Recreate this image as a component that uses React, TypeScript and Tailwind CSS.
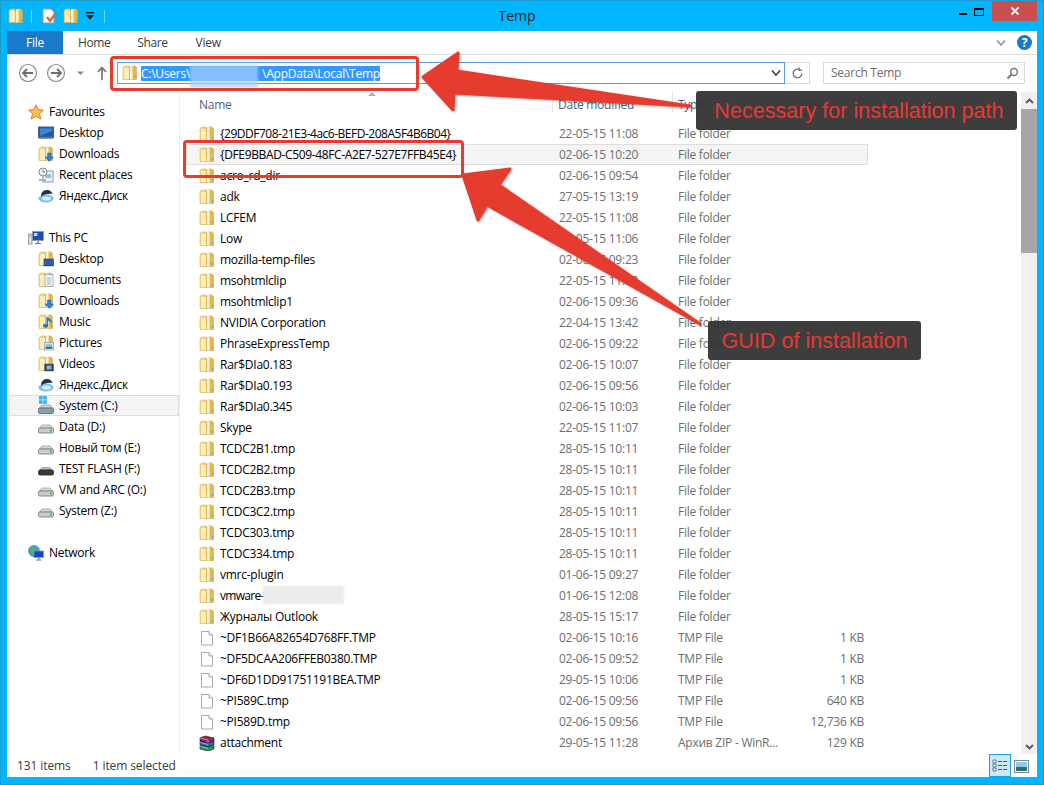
import React from "react";

const Folder = ({ overlay }: { overlay?: React.ReactNode }) => (
  <svg width="16" height="16" viewBox="0 0 16 16" className="shrink-0">
    <path d="M1 2.5 L3 1 H7 V14.5 H1 Z" fill="#f4d77e" stroke="#d4b565" strokeWidth=".6" />
    <path d="M7 2 L10 1 H13 L14.5 2.5 V14.5 H7 Z" fill="#e8c160" stroke="#c9a44a" strokeWidth=".6" />
    <path d="M2 3 H7 V14 H2 Z" fill="#fbeeb8" />
    <path d="M8 1.6 L10.5 1 V14.5 H8 Z" fill="#f7f1d5" />
    <path d="M11 2 H14 V14.5 H11 Z" fill="#e3b94f" />
    <rect x="13" y="11" width="1.4" height="1.6" fill="#5aa5dd" />
    {overlay}
  </svg>
);

const FileIco = () => (
  <svg width="16" height="16" viewBox="0 0 16 16" className="shrink-0">
    <path d="M2.5 1.5 H10 L13.5 5 V15 H2.5 Z" fill="#fff" stroke="#a9a9a9" />
    <path d="M10 1.5 V5 H13.5" fill="#f2f2f2" stroke="#a9a9a9" />
  </svg>
);

const Rar = () => (
  <svg width="16" height="16" viewBox="0 0 16 16" className="shrink-0">
    <path d="M1 11 L6 9 L15 11 V14 L9 16 L1 14 Z" fill="#1d9c55" stroke="#111" strokeWidth=".6" />
    <path d="M1 6.5 L6 4.5 L15 6.5 V10 L9 12 L1 10 Z" fill="#2f5fc0" stroke="#111" strokeWidth=".6" />
    <path d="M1 3 L6 1 L15 3 V6 L9 8 L1 6 Z" fill="#9c2257" stroke="#111" strokeWidth=".6" />
    <path d="M1 3 L9 5 V8 M9 9.5 L1 7.5 M9 13.5 L1 11.5" fill="none" stroke="#ddd" strokeWidth=".6" />
  </svg>
);

const Star = () => (
  <svg width="16" height="16" viewBox="0 0 16 16" className="shrink-0">
    <path d="M8 .8 L10.2 5.6 L15.4 6.2 L11.5 9.6 L12.7 15 L8 12.2 L3.3 15 L4.5 9.6 L.6 6.2 L5.8 5.6 Z" fill="#fbc14e" stroke="#e8772c" />
  </svg>
);

const Monitor = () => (
  <svg width="16" height="16" viewBox="0 0 16 16" className="shrink-0">
    <rect x=".5" y="2" width="15" height="10.5" fill="#2a5fb0" stroke="#4b5a6b" />
    <rect x="2" y="3.5" width="12" height="7.5" fill="#3f86d6" />
    <path d="M2 11 L14 6 V11 Z" fill="#1f5aa8" />
    <rect x="1" y="12.5" width="14" height="1.5" fill="#8a94a0" />
  </svg>
);

const Recent = () => (
  <svg width="16" height="16" viewBox="0 0 16 16" className="shrink-0">
    <rect x="5" y="4" width="10" height="11" fill="#eef2f5" stroke="#8b97a3" />
    <rect x="7" y="7" width="6" height="4" fill="#8fc0e6" />
    <rect x="1" y="12" width="7" height="2" fill="#aab2ba" />
    <circle cx="5" cy="5" r="4" fill="#f4f4f4" stroke="#7f8790" />
    <path d="M5 2.8 V5 H7" stroke="#555" fill="none" strokeWidth=".8" />
  </svg>
);

const Yandex = () => (
  <svg width="16" height="16" viewBox="0 0 16 16" className="shrink-0">
    <ellipse cx="8" cy="10.5" rx="7.5" ry="4" fill="#79bdec" />
    <path d="M3 8.5 C3 4 6 2 9 2 C12 2 14 4 14.5 6 C10 5.5 6 6.5 3 8.5 Z" fill="#26323f" />
    <ellipse cx="8.5" cy="10.5" rx="4.5" ry="2" fill="#d8edfb" />
  </svg>
);

const PC = () => (
  <svg width="16" height="16" viewBox="0 0 16 16" className="shrink-0">
    <rect x=".5" y="4" width="3.5" height="10" fill="#dfe3e6" stroke="#7a828a" strokeWidth=".7" />
    <rect x="1.3" y="5.5" width="1.8" height="1" fill="#4fb052" />
    <rect x="4.5" y="1.5" width="11" height="9" fill="#1c4fae" stroke="#8994a0" strokeWidth=".7" />
    <rect x="6" y="3" width="3.4" height="3" fill="#bcdcf6" />
    <rect x="9" y="10.5" width="2" height="2.5" fill="#9aa3ab" />
    <rect x="7" y="13" width="6" height="1" fill="#7a828a" />
  </svg>
);

const Drive = () => (
  <svg width="16" height="16" viewBox="0 0 16 16" className="shrink-0">
    <path d="M1.5 9 L4 6 H12 L14.5 9 Z" fill="#d9dcdf" stroke="#8f959b" strokeWidth=".7" />
    <rect x=".5" y="9" width="15" height="5" rx="1.4" fill="#c9cdd0" stroke="#6c7278" strokeWidth=".8" />
    <rect x="12" y="10.5" width="2" height="2" fill="#52b24a" />
  </svg>
);

const SysDrive = () => (
  <svg width="16" height="20" viewBox="0 0 16 20" className="shrink-0">
    <rect x="1" y="0" width="3.6" height="3.6" fill="#2ab7f0" />
    <rect x="5.2" y="0" width="3.6" height="3.6" fill="#2ab7f0" />
    <rect x="1" y="4.2" width="3.6" height="3.6" fill="#2ab7f0" />
    <rect x="5.2" y="4.2" width="3.6" height="3.6" fill="#2ab7f0" />
    <path d="M1.5 12 L4 9 H12 L14.5 12 Z" fill="#d2d6da" stroke="#8f959b" strokeWidth=".7" />
    <rect x=".5" y="12" width="15" height="5.5" rx="1.4" fill="#8aa0ad" stroke="#566069" strokeWidth=".8" />
    <rect x="12" y="13.8" width="2" height="2" fill="#52b24a" />
  </svg>
);

const Flash = () => (
  <svg width="16" height="16" viewBox="0 0 16 16" className="shrink-0">
    <path d="M2 9 L4 6.5 H12 L14 9 Z" fill="#bfc2c5" stroke="#777" strokeWidth=".6" />
    <rect x=".5" y="9" width="15" height="5" rx="1.6" fill="#3b3b3b" stroke="#222" strokeWidth=".8" />
  </svg>
);

const Net = () => (
  <svg width="16" height="16" viewBox="0 0 16 16" className="shrink-0">
    <circle cx="6" cy="6" r="5.5" fill="#3e9fd8" stroke="#2f7f9f" strokeWidth=".6" />
    <path d="M2 3 L6 1.5 L7 5 L4 8 L2 6 Z" fill="#5eb64f" />
    <rect x="6" y="6" width="9.5" height="6.5" fill="#1148c2" stroke="#8a949e" strokeWidth=".7" />
    <rect x="10" y="12.5" width="1.6" height="2" fill="#8a949e" />
    <rect x="8" y="14.5" width="5.5" height="1" fill="#707880" />
  </svg>
);

const ovDesktop = (
  <g><rect x="6" y="8" width="9.5" height="6.5" fill="#2a5fb0" stroke="#39454f" strokeWidth=".7" /><rect x="5.5" y="14" width="10" height="1.2" fill="#39454f" /></g>
);
const ovDocs = (
  <g><rect x="7" y="2.5" width="8" height="12" fill="#f2f5f7" stroke="#8b97a3" strokeWidth=".7" /><path d="M9 6 H13 M9 8 H13 M9 10 H13 M9 12 H13" stroke="#8fa6bd" strokeWidth=".8" /></g>
);
const ovDown = <path d="M9.5 7 H13 V11 H15.5 L11.2 15.5 L7 11 H9.5 Z" fill="#2b83d4" stroke="#1b5fa8" strokeWidth=".5" />;
const ovMusic = <path d="M10 3 V11.5 A2.6 2 0 1 1 8.5 10 V3 Z M10 3 C12 5 14.5 6 13.5 10 C13 7.5 11.5 7 10 6.5 Z" fill="#2979c9" />;
const ovPic = (
  <g><rect x="6.5" y="7.5" width="9" height="7.5" fill="#fff" stroke="#8a949e" strokeWidth=".7" /><rect x="7.5" y="8.5" width="7" height="3" fill="#8fcbe8" /><rect x="7.5" y="11.5" width="7" height="2.5" fill="#3d7f6b" /></g>
);
const ovVid = (
  <g><rect x="6.5" y="8" width="9" height="7" fill="#2d3d4d" stroke="#5a6670" strokeWidth=".6" /><rect x="8.5" y="9.5" width="5" height="4" fill="#7fb8e0" /></g>
);

const NavRow = ({ icon, label, indent, hover }: { icon: React.ReactNode; label: string; indent?: boolean; hover?: boolean }) => (
  <div className={`flex h-[21px] items-center border ${hover ? "border-[#dedede] bg-[#f5f5f5]" : "border-transparent"} ${indent ? "pl-[28px]" : "pl-[18px]"}`}>
    <div className="flex h-[16px] w-[16px] shrink-0 items-center justify-center">{icon}</div>
    <span className="ml-[5px] whitespace-nowrap text-black">{label}</span>
  </div>
);

type Row = [string, string, string, string, "d" | "f" | "z"];
const FF = "File folder";
const rows: Row[] = [
  ["{29DDF708-21E3-4ac6-BEFD-208A5F4B6B04}", "22-05-15 11:08", FF, "", "d"],
  ["{DFE9BBAD-C509-48FC-A2E7-527E7FFB45E4}", "02-06-15 10:20", FF, "", "d"],
  ["acro_rd_dir", "02-06-15 09:54", FF, "", "d"],
  ["adk", "27-05-15 13:19", FF, "", "d"],
  ["LCFEM", "22-05-15 11:08", FF, "", "d"],
  ["Low", "22-05-15 11:06", FF, "", "d"],
  ["mozilla-temp-files", "02-06-15 09:23", FF, "", "d"],
  ["msohtmlclip", "22-05-15 11:08", FF, "", "d"],
  ["msohtmlclip1", "02-06-15 09:36", FF, "", "d"],
  ["NVIDIA Corporation", "22-04-15 13:42", FF, "", "d"],
  ["PhraseExpressTemp", "02-06-15 09:22", FF, "", "d"],
  ["Rar$DIa0.183", "02-06-15 10:07", FF, "", "d"],
  ["Rar$DIa0.193", "02-06-15 09:56", FF, "", "d"],
  ["Rar$DIa0.345", "02-06-15 10:03", FF, "", "d"],
  ["Skype", "22-05-15 11:07", FF, "", "d"],
  ["TCDC2B1.tmp", "28-05-15 10:11", FF, "", "d"],
  ["TCDC2B2.tmp", "28-05-15 10:11", FF, "", "d"],
  ["TCDC2B3.tmp", "28-05-15 10:11", FF, "", "d"],
  ["TCDC3C2.tmp", "28-05-15 10:11", FF, "", "d"],
  ["TCDC303.tmp", "28-05-15 10:11", FF, "", "d"],
  ["TCDC334.tmp", "28-05-15 10:11", FF, "", "d"],
  ["vmrc-plugin", "01-06-15 09:27", FF, "", "d"],
  ["vmware-", "01-06-15 12:08", FF, "", "d"],
  ["Журналы Outlook", "28-05-15 15:17", FF, "", "d"],
  ["~DF1B66A82654D768FF.TMP", "02-06-15 10:16", "TMP File", "1 KB", "f"],
  ["~DF5DCAA206FFEB0380.TMP", "02-06-15 09:52", "TMP File", "1 KB", "f"],
  ["~DF6D1DD91751191BEA.TMP", "29-05-15 10:06", "TMP File", "1 KB", "f"],
  ["~PI589C.tmp", "02-06-15 09:56", "TMP File", "640 KB", "f"],
  ["~PI589D.tmp", "02-06-15 09:56", "TMP File", "12,736 KB", "f"],
  ["attachment", "29-05-15 11:28", "Архив ZIP - WinR...", "129 KB", "z"],
];

export default function App() {
  return (
    <div className="relative flex h-[785px] w-[1044px] flex-col overflow-hidden border border-[#1a9ccf] bg-[#00b7ff] font-['Open_Sans',sans-serif] text-[12px] tracking-[-0.25px]">
      {/* title bar */}
      <div className="flex h-[30px] shrink-0 items-start">
        <div className="ml-[7px] mt-[7px] flex items-center">
          <Folder />
          <div className="ml-[7px] h-[13px] w-px bg-[#7fd0ee]" />
          <svg width="16" height="16" viewBox="0 0 16 16" className="ml-[9px] shrink-0">
            <path d="M2 1 H10 L13 4 V15 H2 Z" fill="#fff" stroke="#999" />
            <path d="M6 9 L9 13 L15 5" fill="none" stroke="#e0622c" strokeWidth="2.2" />
          </svg>
          <div className="ml-[6px]"><Folder /></div>
          <svg width="8" height="8" viewBox="0 0 8 8" className="ml-[7px] shrink-0">
            <rect x="0" y="0" width="8" height="1.4" fill="#111" />
            <path d="M0 3 H8 L4 7.5 Z" fill="#111" />
          </svg>
          <div className="ml-[10px] h-[13px] w-px bg-[#7fd0ee]" />
        </div>
        <div className="flex-1 pr-[30px] pt-[4px] text-center text-[14px] tracking-normal text-[#222]">Temp</div>
        <div className="mr-[6px] flex items-start">
          <div className="mr-[7px] mt-[12px] h-[2px] w-[8px] bg-black" />
          <div className="mr-[8px] mt-[7px] h-[8px] w-[10px] border border-t-2 border-black" />
          <div className="flex h-[20px] w-[45px] items-center justify-center bg-[#c75050]">
            <svg width="10" height="10" viewBox="0 0 10 10"><path d="M1.5 1.5 L8.5 8.5 M8.5 1.5 L1.5 8.5" stroke="#fff" strokeWidth="1.8" /></svg>
          </div>
        </div>
      </div>

      {/* window body */}
      <div className="mx-[6px] flex h-[746px] shrink-0 flex-col bg-white">
        {/* ribbon tabs */}
        <div className="flex h-[24px] shrink-0 items-center border-b border-[#dadbdc]">
          <div className="flex h-[23px] w-[56px] items-center justify-center bg-[#1979ca] text-white">File</div>
          <span className="ml-[15px] tracking-[-0.4px] text-[#3b3b3b]">Home</span>
          <span className="ml-[27px] tracking-[-0.4px] text-[#3b3b3b]">Share</span>
          <span className="ml-[28px] text-[#3b3b3b]">View</span>
          <svg width="10" height="8" viewBox="0 0 10 8" className="ml-auto mr-[11px]"><path d="M1 1.5 L5 6 L9 1.5" fill="none" stroke="#9a9a9a" strokeWidth="1.8" /></svg>
          <div className="mr-[5px] flex h-[15px] w-[15px] items-center justify-center rounded-full bg-[#1979ca] text-[12px] font-bold leading-none text-white">?</div>
        </div>

        {/* nav */}
        <div className="flex h-[37px] shrink-0 items-start pt-[7px]">
          <svg width="110" height="22" viewBox="0 0 110 22" className="shrink-0">
            <circle cx="21" cy="11" r="8.5" fill="none" stroke="#8a8a8a" strokeWidth="1.2" />
            <path d="M26 11 H16 M20 7 L16 11 L20 15" fill="none" stroke="#6d6d6d" strokeWidth="1.8" />
            <circle cx="49" cy="11" r="8.5" fill="none" stroke="#8a8a8a" strokeWidth="1.2" />
            <path d="M44 11 H54 M50 7 L54 11 L50 15" fill="none" stroke="#6d6d6d" strokeWidth="1.8" />
            <path d="M70 9.5 H77 L73.5 13 Z" fill="#8a8a8a" />
            <path d="M95 18 V6 M91 10 L95 5.5 L99 10" fill="none" stroke="#7a7a7a" strokeWidth="1.8" />
          </svg>
          <div className="relative flex h-[22px] w-[668px] items-center border border-[#569de5] pl-[4px]">
            <Folder />
            <span className="ml-[3px] whitespace-nowrap bg-[#3399ff] leading-[15px] text-white">C:\Users\<span className="inline-block w-[72px]" />\AppData\Local\Temp</span>
            <svg width="10" height="8" viewBox="0 0 10 8" className="ml-auto mr-[3px]"><path d="M1 1.5 L5 6 L9 1.5" fill="none" stroke="#444" strokeWidth="1.7" /></svg>
            <div className="absolute left-[72px] top-[2px] h-[23px] w-[68px] bg-[#a8d0ff]/70 blur-[1px]" />
          </div>
          <div className="flex h-[22px] w-[25px] items-center justify-center border border-l-0 border-[#d9d9d9]">
            <svg width="13" height="13" viewBox="0 0 24 24"><path d="M20 12 A8 8 0 1 1 15 4.6 M15 1 V6 H20" fill="none" stroke="#777" strokeWidth="2.6" /></svg>
          </div>
          <div className="ml-[13px] flex h-[22px] w-[202px] items-center justify-between border border-[#d9d9d9] pl-[7px] pr-[5px] text-[#6d6d6d]">
            <span>Search Temp</span>
            <svg width="13" height="13" viewBox="0 0 13 13"><circle cx="8" cy="5" r="3.4" fill="none" stroke="#777" strokeWidth="1.5" /><path d="M5.5 7.5 L1.5 11.5" stroke="#777" strokeWidth="2" /></svg>
          </div>
        </div>

        {/* main */}
        <div className="flex min-h-0 flex-1">
          <aside className="w-[173px] shrink-0 border-r border-[#eeeeee] pl-[2px] pt-[9px]">
            <NavRow icon={<Star />} label="Favourites" />
            <NavRow indent icon={<Monitor />} label="Desktop" />
            <NavRow indent icon={<Folder overlay={ovDown} />} label="Downloads" />
            <NavRow indent icon={<Recent />} label="Recent places" />
            <NavRow indent icon={<Yandex />} label="Яндекс.Диск" />
            <div className="h-[21px]" />
            <NavRow icon={<PC />} label="This PC" />
            <NavRow indent icon={<Folder overlay={ovDesktop} />} label="Desktop" />
            <NavRow indent icon={<Folder overlay={ovDocs} />} label="Documents" />
            <NavRow indent icon={<Folder overlay={ovDown} />} label="Downloads" />
            <NavRow indent icon={<Folder overlay={ovMusic} />} label="Music" />
            <NavRow indent icon={<Folder overlay={ovPic} />} label="Pictures" />
            <NavRow indent icon={<Folder overlay={ovVid} />} label="Videos" />
            <NavRow indent icon={<Yandex />} label="Яндекс.Диск" />
            <NavRow indent hover icon={<SysDrive />} label="System (C:)" />
            <NavRow indent icon={<Drive />} label="Data (D:)" />
            <NavRow indent icon={<Drive />} label="Новый том (E:)" />
            <NavRow indent icon={<Flash />} label="TEST FLASH (F:)" />
            <NavRow indent icon={<Drive />} label="VM and ARC (O:)" />
            <NavRow indent icon={<Drive />} label="System (Z:)" />
            <div className="h-[21px]" />
            <NavRow icon={<Net />} label="Network" />
          </aside>

          <section className="min-w-0 flex-1">
            <div className="relative flex h-[23px] items-center pt-[2px] text-[#4c607a]">
              <span className="ml-[19px] w-[359px]">Name</span>
              <span className="w-[120px]">Date modified</span>
              <span className="w-[121px]">Type</span>
              <span>Size</span>
              <svg width="8" height="4" viewBox="0 0 8 4" className="absolute left-[188px] top-0"><path d="M0 4 L4 0 L8 4 Z" fill="#9bb5cf" /></svg>
              <div className="absolute left-[372px] top-0 h-[20px] w-px bg-[#e5e5e5]" />
              <div className="absolute left-[492px] top-0 h-[20px] w-px bg-[#e5e5e5]" />
              <div className="absolute left-[612px] top-0 h-[20px] w-px bg-[#e5e5e5]" />
              <div className="absolute left-[692px] top-0 h-[20px] w-px bg-[#e5e5e5]" />
            </div>
            <div className="ml-[6px] mt-[8px] w-[682px]">
              {rows.map((r, i) => (
                <div
                  key={r[0]}
                  className={`grid h-[21px] grid-cols-[33px_339px_119px_120px_66px] items-center border ${i === 1 ? "border-[#dedede] bg-[#f5f5f5]" : "border-transparent"}`}
                >
                  <div className="pl-[12px]">{r[4] === "d" ? <Folder /> : r[4] === "f" ? <FileIco /> : <Rar />}</div>
                  <span className={`relative whitespace-nowrap text-black ${i === 0 ? "tracking-[-0.49px]" : i === 1 ? "tracking-[-0.36px]" : r[0] === "vmware-" ? "tracking-[-0.7px]" : ""}`}>
                    {r[0]}
                    {r[0] === "vmware-" && <span className="absolute left-[43px] top-[-1px] h-[18px] w-[81px] bg-[#ececec] blur-[1px]" />}
                  </span>
                  <span className="whitespace-nowrap text-[#6d6d6d]">{r[1]}</span>
                  <span className="whitespace-nowrap text-[#6d6d6d]">{r[2]}</span>
                  <span className="whitespace-nowrap text-right text-[#6d6d6d]">{r[3]}</span>
                </div>
              ))}
            </div>
          </section>

          <div className="flex w-[16px] shrink-0 flex-col bg-[#f0f0f0]">
            <div className="flex h-[17px] items-center justify-center">
              <svg width="9" height="6" viewBox="0 0 9 6"><path d="M1 5 L4.5 1.5 L8 5" fill="none" stroke="#555" strokeWidth="1.8" /></svg>
            </div>
            <div className="h-[144px] bg-[#a6a6a6]" />
            <div className="flex flex-1 items-end justify-center pb-[4px]">
              <svg width="9" height="6" viewBox="0 0 9 6"><path d="M1 1 L4.5 4.5 L8 1" fill="none" stroke="#555" strokeWidth="1.8" /></svg>
            </div>
          </div>
        </div>

        {/* status */}
        <div className="flex h-[23px] shrink-0 items-center pl-[10px] tracking-[-0.1px] text-[#3b3b3b]">
          <span>131 items</span>
          <span className="ml-[22px]">1 item selected</span>
          <div className="ml-auto mr-[26px] flex h-[23px] w-[22px] items-center justify-center border border-[#26a0da] bg-[#cce8ff]">
            <svg width="16" height="13" viewBox="0 0 16 13">
              <path d="M1 1 H4 V4 H1 Z M1 5 H4 V8 H1 Z M1 9 H4 V12 H1 Z" fill="#fff" stroke="#4a5a6a" strokeWidth=".8" />
              <path d="M6 2.5 H15 M6 6.5 H15 M6 10.5 H15" stroke="#4a5a6a" strokeWidth="1.2" strokeDasharray="4 1" />
            </svg>
          </div>
        </div>
      </div>

      {/* large-icon view toggle, sits over the status bar */}
      <div className="absolute left-[1013px] top-[759px]">
        <svg width="15" height="13" viewBox="0 0 15 13">
          <rect x=".5" y=".5" width="14" height="12" fill="#fff" stroke="#7a8a9a" />
          <rect x="2" y="2" width="11" height="5" fill="#8fcbe8" />
          <rect x="2" y="7" width="11" height="4" fill="#2e6f6a" />
        </svg>
      </div>

      {/* annotation arrows */}
      <svg width="1044" height="785" viewBox="0 0 1044 785" className="pointer-events-none absolute left-[-1px] top-[-1px] drop-shadow-[1px_1px_1px_rgba(0,0,0,0.3)]">
        <path d="M423 77 L458 53 L457 71 L690 106 L454 93 L453 110 Z" fill="#e63c30" stroke="#e63c30" strokeWidth="3" strokeLinejoin="round" />
        <path d="M463 175 L510 169 L499 185 L700 324 L487 205 L478 220 Z" fill="#e63c30" stroke="#e63c30" strokeWidth="3" strokeLinejoin="round" />
      </svg>

      {/* highlight frames */}
      <div className="pointer-events-none absolute left-[109px] top-[55px] h-[35px] w-[309px] rounded-[4px] border-[3px] border-[#e63c30]" />
      <div className="pointer-events-none absolute left-[182px] top-[139px] h-[38px] w-[281px] rounded-[4px] border-[3px] border-[#e63c30]" />

      {/* annotation labels */}
      <div className="absolute left-[695px] top-[90px] flex h-[39px] w-[321px] items-center justify-center rounded-[3px] bg-[#333333]/95 pl-[5px] pt-[1px] font-['Liberation_Sans',sans-serif] text-[21.6px] tracking-normal text-[#e53935]">
        Necessary for installation path
      </div>
      <div className="absolute left-[707px] top-[320px] flex h-[39px] w-[213px] items-center justify-center rounded-[3px] bg-[#333333]/95 pt-[1px] font-['Liberation_Sans',sans-serif] text-[21.6px] tracking-normal text-[#e53935]">
        GUID of installation
      </div>
    </div>
  );
}
